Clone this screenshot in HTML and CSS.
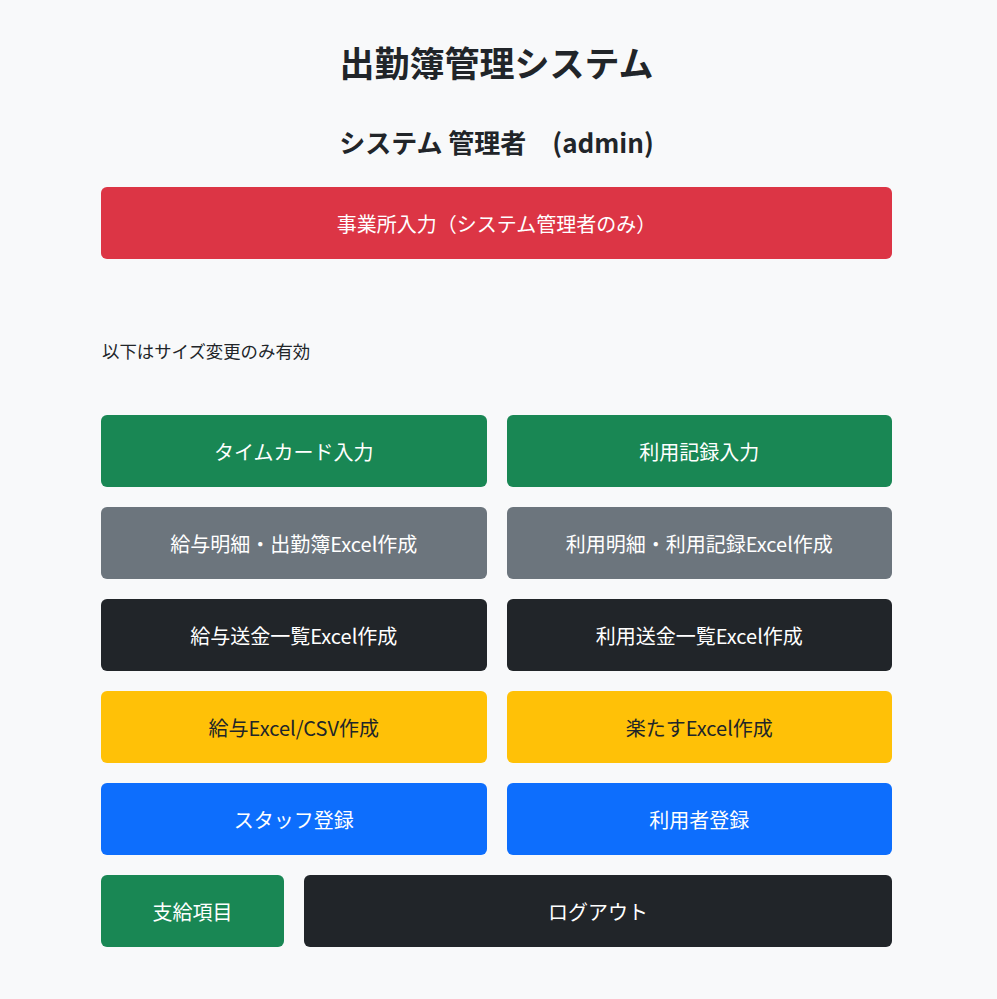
FILE: index.html
```html
<!DOCTYPE html>
<html lang="ja">
<head>
<meta charset="utf-8">
<title>出勤簿管理システム</title>
<link rel="stylesheet" href="styles.css">
</head>
<body>
<main class="container">
  <h1 class="title">出勤簿管理システム</h1>
  <h2 class="user">システム 管理者　(admin)</h2>
  <button class="btn btn-danger btn-full">事業所入力（システム管理者のみ）</button>
  <p class="note">以下はサイズ変更のみ有効</p>
  <div class="grid">
    <button class="btn btn-success">タイムカード入力</button>
    <button class="btn btn-success">利用記録入力</button>
    <button class="btn btn-secondary">給与明細・出勤簿Excel作成</button>
    <button class="btn btn-secondary">利用明細・利用記録Excel作成</button>
    <button class="btn btn-dark">給与送金一覧Excel作成</button>
    <button class="btn btn-dark">利用送金一覧Excel作成</button>
    <button class="btn btn-warning">給与Excel/CSV作成</button>
    <button class="btn btn-warning">楽たすExcel作成</button>
    <button class="btn btn-primary">スタッフ登録</button>
    <button class="btn btn-primary">利用者登録</button>
  </div>
  <div class="last-row">
    <button class="btn btn-success btn-small">支給項目</button>
    <button class="btn btn-dark btn-grow">ログアウト</button>
  </div>
</main>
</body>
</html>
```
FILE: styles.css
```css
* { box-sizing: border-box; }
html, body {
  margin: 0;
  padding: 0;
  background: #f8f9fa;
  color: #212529;
  font-family: "Noto Sans CJK JP", "Noto Sans", "Liberation Sans", sans-serif;
}
body { padding-right: 4px; }
.container {
  width: 791px;
  margin: 0 auto;
  padding-top: 41px;
}
.title {
  margin: 0;
  text-align: center;
  font-size: 35px;
  font-weight: 700;
  line-height: 42px;
}
.user {
  margin: 43px 0 0;
  text-align: center;
  font-size: 26px;
  font-weight: 700;
  line-height: 32px;
}
.btn {
  display: flex;
  align-items: center;
  justify-content: center;
  height: 72px;
  border: none;
  border-radius: 6px;
  font-family: inherit;
  font-size: 20px;
  font-weight: 400;
  color: #fff;
  padding: 0 12px;
}
.btn-full {
  width: 100%;
  margin-top: 29px;
}
.note {
  margin: 79px 0 0;
  font-size: 17.4px;
  line-height: 25px;
  padding-left: 1px;
}
.grid {
  margin-top: 52px;
  display: grid;
  grid-template-columns: 1fr 1fr;
  gap: 20px;
}
.last-row {
  margin-top: 20px;
  display: flex;
  gap: 20px;
}
.btn-small { width: 183px; flex: none; }
.btn-grow { flex: 1; }
.btn-danger { background: #dc3545; }
.btn-success { background: #198754; }
.btn-secondary { background: #6c757d; }
.btn-dark { background: #212529; }
.btn-warning { background: #ffc107; color: #212529; }
.btn-primary { background: #0d6efd; }
```
